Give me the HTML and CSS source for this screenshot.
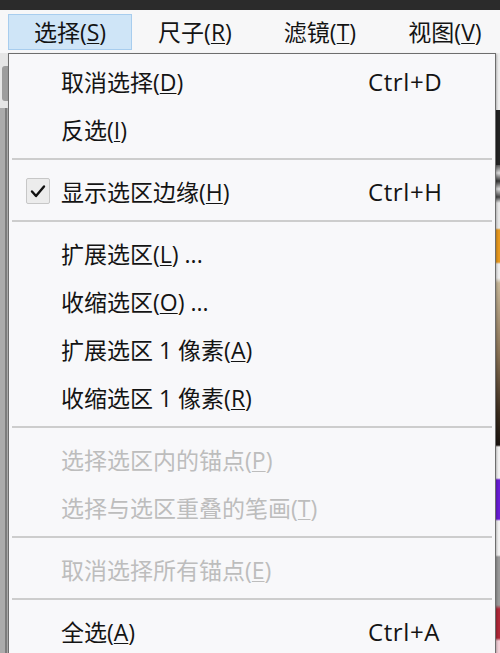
FILE: index.html
```html
<!DOCTYPE html>
<html lang="zh-CN">
<head>
<meta charset="utf-8">
<title>选择菜单</title>
<link rel="stylesheet" href="styles.css">
</head>
<body>
<div class="app">
  <div class="titlebar"></div>
  <div class="menubar">
    <div class="mb-item active">选择(<u>S</u>)</div>
    <div class="mb-item">尺子(<u>R</u>)</div>
    <div class="mb-item">滤镜(<u>T</u>)</div>
    <div class="mb-item">视图(<u>V</u>)</div>
  </div>
  <div class="workspace">
    <div class="left-strip"><div class="thumb"></div></div>
    <div class="canvas"></div>
    <div class="right-strip"></div>
  </div>

  <div class="dropdown">
    <div class="item"><span class="label">取消选择(<u>D</u>)</span><span class="key">Ctrl+D</span></div>
    <div class="item"><span class="label">反选(<u>I</u>)</span></div>
    <div class="sep"></div>
    <div class="item">
      <span class="check"><svg width="24" height="26" viewBox="0 0 24 26"><path d="M6 13.5 L10 18 L18 8.5" fill="none" stroke="#111" stroke-width="2.4" stroke-linecap="round" stroke-linejoin="round"/></svg></span>
      <span class="label">显示选区边缘(<u>H</u>)</span><span class="key">Ctrl+H</span></div>
    <div class="sep"></div>
    <div class="item"><span class="label">扩展选区(<u>L</u>) ...</span></div>
    <div class="item"><span class="label">收缩选区(<u>O</u>) ...</span></div>
    <div class="item"><span class="label">扩展选区 1 像素(<u>A</u>)</span></div>
    <div class="item"><span class="label">收缩选区 1 像素(<u>R</u>)</span></div>
    <div class="sep"></div>
    <div class="item disabled"><span class="label">选择选区内的锚点(<u>P</u>)</span></div>
    <div class="item disabled"><span class="label">选择与选区重叠的笔画(<u>T</u>)</span></div>
    <div class="sep"></div>
    <div class="item disabled"><span class="label">取消选择所有锚点(<u>E</u>)</span></div>
    <div class="sep"></div>
    <div class="item"><span class="label">全选(<u>A</u>)</span><span class="key">Ctrl+A</span></div>
  </div>
</div>
</body>
</html>
```

FILE: styles.css
```css
html, body {
  margin: 0;
  padding: 0;
  width: 500px;
  height: 653px;
  overflow: hidden;
}
body {
  font-family: "Open Sans", "Noto Sans CJK SC", sans-serif;
  color: #141414;
  background: #f7f7f7;
}
.app {
  position: relative;
  width: 500px;
  height: 653px;
  display: flex;
  flex-direction: column;
}
.titlebar {
  height: 10px;
  background: #2b2b2b;
}
.menubar {
  height: 43px;
  background: #f7f7f8;
  display: flex;
  gap: 1px;
  padding-left: 8px;
  box-sizing: border-box;
  padding-top: 4px;
}
.mb-item {
  width: 124px;
  height: 36px;
  box-sizing: border-box;
  text-align: center;
  font-size: 23px;
  line-height: 34px;
  flex: none;
  border: 1px solid transparent;
}
.mb-item.active {
  background: #cfe5f7;
  border-color: #a8cdee;
}
u {
  text-decoration: underline;
  text-decoration-thickness: 1px;
  text-underline-offset: 2px;
}
.workspace {
  flex: 1;
  display: flex;
}
.left-strip {
  width: 8px;
  background: linear-gradient(to bottom, #e6e6e6 0, #e6e6e6 55px, #ababab 55px, #ababab 100%);
  position: relative;
}
.left-strip::after {
  content: "";
  position: absolute;
  top: 55px;
  bottom: 0;
  right: 1px;
  width: 2px;
  background: #7c7c7c;
}
.thumb {
  position: absolute;
  left: 2px;
  top: 13px;
  width: 6px;
  height: 35px;
  border-radius: 3px 0 0 3px;
  background: #9d9d9d;
}
.canvas {
  flex: 1;
  background: #ffffff;
}
.right-strip {
  width: 4px;
  background: linear-gradient(to bottom,
    #eeeeee 0, #eeeeee 57px,
    #232323 57px, #232323 112px,
    #555 112px, #ddd 120px, #333 128px, #ddd 136px, #444 144px,
    #e8e8e8 150px, #e8e8e8 175px,
    #e89a20 177px, #e89a20 209px,
    #eeeeee 211px, #eeeeee 225px,
    #c8b89a 230px, #8a7356 300px, #3a2c1e 360px, #1b1410 392px,
    #f2f2f2 394px, #f2f2f2 425px,
    #6a1ed6 427px, #6a1ed6 466px,
    #f2f2f2 468px, #f2f2f2 502px,
    #9a9a9a 504px, #9a9a9a 552px,
    #b02838 556px, #b02838 585px,
    #f4d0d8 588px, #f4d0d8 100%);
}
.dropdown {
  position: absolute;
  left: 8px;
  top: 53px;
  width: 488px;
  height: 620px;
  box-sizing: border-box;
  background: #f8f8fa;
  border: 1px solid #6e6e6e;
  padding-top: 4px;
  box-shadow: 1px 1px 2px rgba(0,0,0,0.25);
}
.item {
  position: relative;
  height: 48px;
  display: grid;
  grid-template-columns: 52px 307px 1fr;
  align-items: center;
  font-size: 23px;
  line-height: 30px;
  white-space: nowrap;
}
.item .label {
  grid-column: 2;
}
.item .key {
  grid-column: 3;
  font-size: 24px;
  letter-spacing: 0.6px;
}
.item.disabled {
  color: #bdbdbd;
}
.check {
  position: absolute;
  left: 17px;
  top: 10px;
  width: 24px;
  height: 26px;
  box-sizing: border-box;
  border: 1px solid #c7c7c7;
  background: #ececec;
  border-radius: 2px;
}
.check svg {
  display: block;
  margin: -1px;
}
.sep {
  height: 14px;
  position: relative;
}
.sep::after {
  content: "";
  position: absolute;
  left: 3px;
  right: 3px;
  top: 4px;
  height: 2px;
  background: #cdcdcd;
}
```
